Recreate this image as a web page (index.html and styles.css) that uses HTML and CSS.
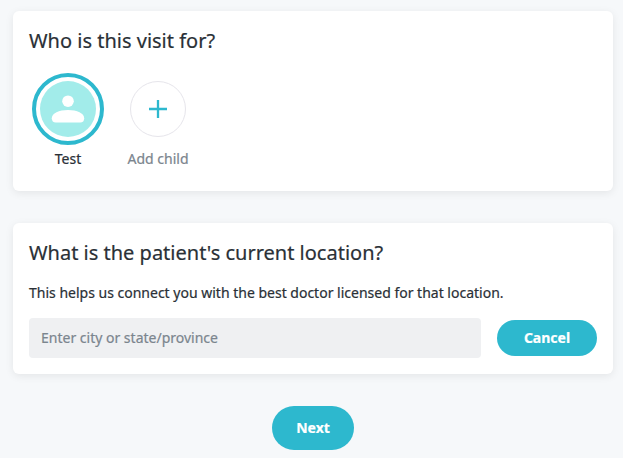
FILE: index.html
```html
<!doctype html>
<html lang="en">
<head>
    <meta charset="utf-8">
    <meta name="viewport" content="width=device-width, initial-scale=1.0">
    <title>Start a visit</title>
    <link rel="stylesheet" href="styles.css">
</head>
<body>
    <form class="container">
        <section class="card patient-card">
            <h2>Who is this visit for?</h2>
            <div class="patients">
                <div class="patient selected">
                    <div class="avatar-ring">
                        <div class="avatar">
                            <svg width="56" height="56" viewBox="0 0 56 56">
                                <circle cx="28" cy="20.2" r="5.8" fill="#fff"/>
                                <path d="M11.8 37.2c0-5 7.2-8.2 16.2-8.2s16.2 3.2 16.2 8.2c0 2.8-1.4 4.3-4 4.3H15.800c-2.600 0-4-1.500-4-4.300z" fill="#fff"/>
                            </svg>
                        </div>
                    </div>
                    <span class="patient-name">Test</span>
                </div>
                <div class="patient">
                    <div class="avatar-ring">
                        <div class="avatar">
                            <svg width="20" height="20" viewBox="0 0 20 20">
                                <path d="M10 1v18M1 10h18" stroke="#2db8ce" stroke-width="2.3"/>
                            </svg>
                        </div>
                    </div>
                    <span class="patient-name">Add child</span>
                </div>
            </div>
        </section>

        <section class="card location-card">
            <h2>What is the patient's current location?</h2>
            <p>This helps us connect you with the best doctor licensed for that location.</p>
            <div class="location-row">
                <input type="text" class="form-control" placeholder="Enter city or state/province">
                <button type="button" class="btn btn-cancel">Cancel</button>
            </div>
        </section>

        <button type="button" class="btn btn-next">Next</button>
    </form>
</body>
</html>
```

FILE: styles.css
```css
body {
    margin: 0;
    background-color: #f6f8fa;
    color: #2a3036;
    font-family: "Noto Sans", "Open Sans", sans-serif;
    font-size: 14px;
    -webkit-text-stroke: 0.2px;
    overflow: hidden;
}
.container {
    display: flex;
    flex-direction: column;
    align-items: center;
    width: 600px;
    margin-left: 13px;
    padding-top: 11px;
}
.card {
    width: 100%;
    margin-bottom: 32px;
    padding: 16px;
    border-radius: 6px;
    background-color: #fff;
    box-shadow: 0 2px 8px rgba(0, 0, 0, 0.08);
    box-sizing: border-box;
}
.patient-card {
    height: 180px;
}
.location-card {
    height: 151px;
}
h2 {
    margin: 0;
    font-size: 20px;
    font-weight: 400;
    line-height: 28px;
}
p {
    margin: 16px 0 15px;
    line-height: 20px;
}
.patients {
    display: flex;
    gap: 12px;
    margin-top: 18px;
}
.patient {
    display: flex;
    flex-direction: column;
    align-items: center;
    width: 78px;
    color: #7b858e;
}
.patient.selected {
    color: #2a3036;
}
.avatar-ring {
    display: flex;
    justify-content: center;
    align-items: center;
    width: 72px;
    height: 72px;
    border-radius: 50%;
    box-sizing: border-box;
}
.selected .avatar-ring {
    border: 4px solid #2db8ce;
}
.avatar {
    display: flex;
    justify-content: center;
    align-items: center;
    width: 56px;
    height: 56px;
    border: 1px solid #e6e5eb;
    border-radius: 50%;
    box-sizing: border-box;
}
.selected .avatar {
    border: none;
    background-color: #a2ecea;
}
.patient-name {
    margin-top: 4px;
    line-height: 20px;
}
.location-row {
    display: flex;
    align-items: center;
    gap: 16px;
}
.form-control {
    flex: 1;
    height: 40px;
    padding: 0 12px 2px;
    border: none;
    border-radius: 4px;
    background-color: #eff0f2;
    font: inherit;
    box-sizing: border-box;
}
.form-control::placeholder {
    color: #7b858e;
}
.btn {
    padding: 0 0 2px;
    border: none;
    border-radius: 22px;
    background-color: #2db8ce;
    color: #fff;
    font: inherit;
    font-weight: 700;
    cursor: pointer;
}
.btn-cancel {
    width: 100px;
    height: 36px;
}
.btn-next {
    width: 82px;
    height: 44px;
}
```
